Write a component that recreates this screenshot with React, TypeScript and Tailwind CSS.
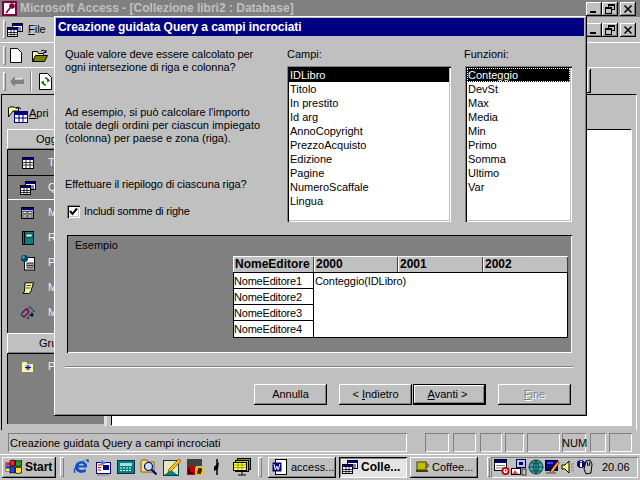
import React from "react";

const raised = "shadow-[inset_-1px_-1px_0_#000,inset_1px_1px_0_#fff,inset_-2px_-2px_0_#808080]";
const sunkenThin = "shadow-[inset_1px_1px_0_#808080,inset_-1px_-1px_0_#fff]";
const field = "shadow-[inset_1px_1px_0_#808080,inset_2px_2px_0_#000,inset_-1px_-1px_0_#fff,inset_-2px_-2px_0_#c0c0c0]";

function Grip() {
  return <div className="w-[3px] h-[19px] ml-[3px] shrink-0 border-l border-t border-white border-r border-r-[#808080] border-b border-b-[#808080]" />;
}

function WinButtons({ className }: { className: string }) {
  const b = `w-[16px] h-[14px] bg-[#c0c0c0] flex items-center justify-center ${raised}`;
  return (
    <div className={`flex gap-[0px] ${className}`}>
      <div className={b}><svg width="10" height="10" viewBox="0 0 10 10"><rect x="1" y="7" width="6" height="2" fill="#000" /></svg></div>
      <div className={`${b} mr-[2px]`}><svg width="10" height="10" viewBox="0 0 10 10" fill="none" stroke="#000"><rect x="3.5" y="0.5" width="6" height="5" /><path d="M3 1.5h6" /><rect x="0.5" y="3.5" width="6" height="6" fill="#c0c0c0" /><path d="M0 4.5h6" /></svg></div>
      <div className={b}><svg width="10" height="10" viewBox="0 0 10 10" stroke="#000" strokeWidth="1.5"><path d="M1.5 1.5l7 7M8.5 1.5l-7 7" /></svg></div>
    </div>
  );
}

function Key() {
  return (
    <svg width="15" height="15" viewBox="0 0 15 15"><rect width="15" height="15" fill="#800040" /><rect x="2" y="2" width="11" height="11" fill="#fff" /><path d="M4 12l4-5M4 11l1 1M10 7a2 2 0 1 0-2-2 2 2 0 0 0 2 2z" stroke="#800040" strokeWidth="1.6" fill="#800040" /></svg>
  );
}

function GridIcon({ size = 12 }: { size?: number }) {
  return (
    <svg width={size} height={size} viewBox="0 0 12 12"><rect x="0.5" y="0.5" width="11" height="11" fill="#fff" stroke="#000" /><rect x="1" y="1" width="10" height="2" fill="#000080" /><path d="M1 5.5h10M1 8h10M4 3v8M8 3v8" stroke="#000" strokeWidth="0.8" /></svg>
  );
}

function QueryIcon() {
  return (
    <svg width="16" height="14" viewBox="0 0 16 14"><rect x="5.5" y="0.5" width="10" height="8" fill="#fff" stroke="#000" /><rect x="6" y="1" width="9" height="2" fill="#000080" /><path d="M7 5h7M7 7h7" stroke="#000080" /><rect x="0.5" y="4.5" width="10" height="9" fill="#fff" stroke="#000" /><rect x="1" y="5" width="9" height="2" fill="#000080" /><path d="M1 9.5h9M1 11.5h9M4 7v6M7 7v6" stroke="#000" strokeWidth="0.8" /></svg>
  );
}

function FormIcon() {
  return (
    <svg width="13" height="12" viewBox="0 0 13 12"><rect x="0.5" y="0.5" width="12" height="11" fill="#c0c0c0" stroke="#000" /><rect x="1" y="1" width="11" height="2" fill="#000080" /><rect x="2" y="4.5" width="4" height="2" fill="#fff" stroke="#000" strokeWidth="0.6" /><rect x="7" y="4.5" width="4" height="2" fill="#fff" stroke="#000" strokeWidth="0.6" /><rect x="2" y="8" width="4" height="2" fill="#fff" stroke="#000" strokeWidth="0.6" /><rect x="7" y="8" width="4" height="2" fill="#fff" stroke="#000" strokeWidth="0.6" /></svg>
  );
}

function ReportIcon() {
  return (
    <svg width="12" height="14" viewBox="0 0 12 14"><rect x="0.5" y="0.5" width="11" height="13" fill="#008080" stroke="#000" /><path d="M2.5 0v14" stroke="#000" /><rect x="4" y="3" width="6" height="3" fill="#c8e8e8" stroke="#000" strokeWidth="0.5" /></svg>
  );
}

function PageIcon() {
  return (
    <svg width="16" height="16" viewBox="0 0 16 16"><rect x="4.5" y="2.5" width="10" height="12.5" fill="#fff" stroke="#000" /><circle cx="4.5" cy="3.5" r="3.5" fill="#004080" /><circle cx="3.5" cy="2.5" r="1.4" fill="#40a0a0" /><rect x="7" y="8" width="6" height="5" fill="#fff" stroke="#000" strokeWidth="0.8" /><path d="M7 10.5h6M9 8v5M11 8v5" stroke="#000" strokeWidth="0.7" /></svg>
  );
}

function MacroIcon() {
  return (
    <svg width="12" height="12" viewBox="0 0 12 12"><path d="M3 0.8h8.5L9 9q-.6 2-2.2 2.4H.8q1.4-.8 1.8-2.4z" fill="#ffff99" stroke="#000" /><path d="M4.5 3.5h4.5M4 6h4.5" stroke="#000" strokeWidth="0.7" /></svg>
  );
}

function ModuleIcon() {
  return (
    <svg width="17" height="14" viewBox="0 0 17 14"><path d="M2 8l5-5 3 3-5 5z" fill="none" stroke="#800040" strokeWidth="1.4" /><path d="M8 4l3-3 4 4-3 3-2 2" fill="none" stroke="#004080" strokeWidth="1.4" strokeDasharray="2 1" /><circle cx="2.5" cy="8" r="1.5" fill="#008080" /><circle cx="13" cy="9" r="1.5" fill="#000" /><circle cx="9" cy="12" r="1.3" fill="#404040" /></svg>
  );
}

function FolderStar() {
  return (
    <svg width="14" height="12" viewBox="0 0 14 12"><path d="M0.5 2.5l1-2h4l1 2h6v9h-12z" fill="#ffff99" stroke="#808080" /><path d="M7 3.5v6M4 6.5h6M5 4.5l4 4M9 4.5l-4 4" stroke="#0000ff" strokeWidth="1" /></svg>
  );
}

function Item({ icon, label, active }: { icon: React.ReactNode; label: string; active?: boolean }) {
  return (
    <div className={`h-[25px] flex items-center ${active ? "shadow-[inset_1px_1px_0_#000,inset_-1px_-1px_0_#fff] bg-[#808080]" : ""}`}>
      <div className="w-[40px] flex justify-center pl-[1px] shrink-0">{icon}</div>
      <span className="text-[#f0f0f0] ml-[1px]">{label}</span>
    </div>
  );
}

const fields = ["IDLibro", "Titolo", "In prestito", "Id arg", "AnnoCopyright", "PrezzoAcquisto", "Edizione", "Pagine", "NumeroScaffale", "Lingua"];
const funcs = ["Conteggio", "DevSt", "Max", "Media", "Min", "Primo", "Somma", "Ultimo", "Var"];

function ListBox({ items, focus, width }: { items: string[]; focus?: boolean; width: string }) {
  return (
    <div className={`h-[156px] bg-white p-[2px] ${width} ${field}`}>
      {items.map((t, i) => (
        <div key={t} className={`h-[14px] leading-[14px] pl-[1px] ${i === 0 ? "bg-black text-white" : "text-black"} ${i === 0 && focus ? "outline-1 outline-dotted outline-white -outline-offset-1" : ""}`}>{t}</div>
      ))}
    </div>
  );
}

function DlgButton({ children, className = "" }: { children: React.ReactNode; className?: string }) {
  return <div className={`w-[73px] h-[21px] bg-[#c0c0c0] flex items-center justify-center ${raised} ${className}`}>{children}</div>;
}

function Dialog() {
  const headCell = "h-[17px] bg-[#c0c0c0] font-bold text-[12px] pl-[2px] leading-[16px] border-b border-black shadow-[inset_1px_1px_0_#fff,inset_-1px_0_0_#404040]";
  return (
    <div className={`absolute left-[54px] top-[16px] w-[533px] h-[400px] bg-[#c0c0c0] p-[2px] flex flex-col ${raised}`}>
      <div className="h-[18px] bg-[#000080] text-white font-bold text-[12px] leading-[18px] pl-[2px] tracking-[-0.06px] mr-[1px] shrink-0">Creazione guidata Query a campi incrociati</div>
      <div className="flex-1 flex flex-col pl-[9px] pt-[12px]">
        <div className="flex">
          <div className="w-[222px] shrink-0">
            <p className="tracking-[-0.07px]">Quale valore deve essere calcolato per<br />ogni intersezione di riga e colonna?</p>
            <p className="mt-[32px]">Ad esempio, si può calcolare l'importo<br /><span className="tracking-[0.05px]">totale degli ordini per ciascun impiegato</span><br />(colonna) per paese e zona (riga).</p>
            <p className="mt-[33px] tracking-[-0.1px]">Effettuare il riepilogo di ciascuna riga?</p>
            <label className="mt-[14px] ml-[2px] flex items-center gap-[5px]">
              <span className={`w-[13px] h-[13px] bg-white flex items-center justify-center ${field}`}>
                <svg width="9" height="9" viewBox="0 0 9 9"><path d="M1 4l2.5 3L8 1.5" fill="none" stroke="#000" strokeWidth="2" /></svg>
              </span>
              <span className="tracking-[-0.2px] -ml-[1px]">Includi somme di righe</span>
            </label>
          </div>
          <div className="w-[178px] shrink-0">
            <div>Campi:</div>
            <div className="mt-[5px]"><ListBox items={fields} width="w-[164px]" /></div>
          </div>
          <div className="w-[107px] shrink-0">
            <div className="-ml-[1px]">Funzioni:</div>
            <div className="mt-[5px]"><ListBox items={funcs} focus width="w-[107px]" /></div>
          </div>
        </div>
        <div className="ml-[2px] mt-[13px] w-[505px] h-[118px] bg-[#808080] relative shrink-0 pt-[4px] pl-[8px] shadow-[inset_1px_1px_0_#000,inset_-1px_-1px_0_#fff]">
          <div className="text-black">Esempio</div>
          <div className="mt-[4px] ml-[158px] w-[335px] grid grid-cols-[81px_84px_85px_85px]">
            <div className={headCell}>NomeEditore</div>
            <div className={headCell}>2000</div>
            <div className={headCell}>2001</div>
            <div className={headCell}>2002</div>
            <div className="col-span-4 flex bg-white border-b border-r border-black">
              <div className="w-[81px] shrink-0">
                {["NomeEditore1", "NomeEditore2", "NomeEditore3", "NomeEditore4"].map((n, i) => (
                  <div key={n} className={`h-[16px] leading-[17px] tracking-[-0.2px] border-r border-l border-black ${i < 3 ? "border-b" : ""}`}>{n}</div>
                ))}
              </div>
              <div className="pl-[1px] leading-[17px] tracking-[-0.1px]">Conteggio(IDLibro)</div>
            </div>
          </div>
        </div>
        <div className="mt-[13px] w-[508px] h-[2px] bg-white border-t border-[#808080] shrink-0" />
        <div className="mt-[16px] flex pl-[189px]">
          <DlgButton>Annulla</DlgButton>
          <DlgButton className="ml-[12px]"><span>&lt; <u>I</u>ndietro</span></DlgButton>
          <DlgButton className="ml-[1px] outline outline-black -outline-offset-1 shadow-[inset_-2px_-2px_0_#000,inset_2px_2px_0_#fff,inset_-3px_-3px_0_#808080]"><span className="-ml-[4px]"><u>A</u>vanti &gt;</span></DlgButton>
          <DlgButton className="ml-[12px] text-[#808080] [text-shadow:1px_1px_0_#fff]"><span><u>F</u>ine</span></DlgButton>
        </div>
      </div>
    </div>
  );
}

function TrayIcons() {
  return (
    <div className="flex items-center gap-[1px] ml-[3px]">
      <svg width="16" height="17" viewBox="0 0 16 17"><rect x="0.5" y="0.5" width="12" height="11" fill="#fff" stroke="#000" /><rect x="1" y="1" width="11" height="3" fill="#000080" /><path d="M2 6.5h9M2 9h9" stroke="#808080" /><circle cx="11.5" cy="12" r="4" fill="#c00000" /><circle cx="11.5" cy="12" r="2.2" fill="#fff" /><path d="M11.5 10.5V12h1" stroke="#000" strokeWidth="0.8" fill="none" /></svg>
      <svg width="16" height="17" viewBox="0 0 16 17"><rect x="5.5" y="0.5" width="9" height="8" fill="#c0c0ff" stroke="#000040" /><rect x="8" y="3" width="4" height="3" fill="#000080" /><rect x="0.5" y="9.5" width="9" height="6" fill="#fff" stroke="#000" /><path d="M1 15l3-4 3 4" fill="#ff4040" /><rect x="11" y="10" width="4" height="6" fill="#c0c0c0" stroke="#000" strokeWidth="0.7" /></svg>
      <svg width="16" height="16" viewBox="0 0 16 16"><circle cx="8" cy="8" r="7" fill="#40a0a0" stroke="#004040" /><path d="M1 8h14M8 1v14M3 3.5q5 3 10 0M3 12.5q5-3 10 0M8 1q-5 7 0 14M8 1q5 7 0 14" stroke="#004040" strokeWidth="0.8" fill="none" /></svg>
      <svg width="15" height="16" viewBox="0 0 15 16"><rect x="0.5" y="1.5" width="12" height="10" fill="#000080" stroke="#000" /><path d="M2 3h6v2H2z" fill="#4040ff" /><path d="M13 2L6 11l-1 3 3-1 6-9z" fill="#ffcc00" stroke="#800000" strokeWidth="0.8" /><path d="M1 13h10v2H1z" fill="#808080" /></svg>
      <svg width="14" height="16" viewBox="0 0 14 16"><path d="M1 6h3l4-4v12l-4-4H1z" fill="#ffff80" stroke="#000" /><path d="M10 6l3-2M10 8h3M10 10l3 2" stroke="#808080" /></svg>
      <svg width="18" height="16" viewBox="0 0 18 16"><circle cx="5" cy="5" r="4" fill="#000080" /><rect x="4" y="4" width="2" height="4" fill="#fff" /><rect x="4" y="1.8" width="2" height="1.4" fill="#fff" /><path d="M10 2l4-1 2 4-1 9-5 1-2-5z" fill="#c0c0c0" stroke="#000" /><path d="M11 3l1 4M14 3l-1 4" stroke="#000" /></svg>
    </div>
  );
}

function QuickIcons() {
  return (
    <div className="flex items-center ml-[8px] gap-[5px] w-[186px] shrink-0">
      <svg width="18" height="18" viewBox="0 0 18 18"><path d="M15 9.5H6.2c.2 2.5 3.800 3.500 7.500 1.300v3c-4.500 2.200-10.500.8-10.500-4.800C3.200 4 9 2 12.800 4.200 15 5.500 15.200 7.800 15 9.500zM6.300 7.500H12c0-2.700-5-2.800-5.700 0z" fill="#0a50c8" /><path d="M2 14C0 10 8 3 16 1c1.500 1 1 3 0 4-.5-1-1-2-2-3C9 4 5 8 3 12c0 1 .3 2 1 2.500-1 .7-1.700.5-2-.5z" fill="#0a50c8" /></svg>
      <svg width="17" height="17" viewBox="0 0 17 17"><rect x="1.500" y="3.500" width="14" height="11" fill="#fff" stroke="#000080" /><path d="M3 6h3M3 8.500h3M3 11h3" stroke="#c00000" /><rect x="8" y="6" width="6" height="5" fill="#000080" /><path d="M6 1l5 3-5 3z" fill="#4080ff" /><path d="M2 16h12" stroke="#808080" /></svg>
      <svg width="18" height="14" viewBox="0 0 18 14"><rect x="0.500" y="0.500" width="17" height="13" fill="#008080" stroke="#003040" /><rect x="3" y="3" width="12" height="3" fill="#a0e0e0" /><path d="M3 8h12M3 10.500h12" stroke="#fff" strokeDasharray="2 1" /></svg>
      <svg width="18" height="18" viewBox="0 0 18 18"><path d="M1 4l1-2h5l1 2h6v10H1z" fill="#ffe080" stroke="#806000" /><circle cx="8.500" cy="8.500" r="4" fill="#c0e0ff" stroke="#000080" strokeWidth="1.200" /><path d="M11.500 11.500l5 5" stroke="#000080" strokeWidth="2.200" /></svg>
      <svg width="18" height="18" viewBox="0 0 18 18"><rect x="0.500" y="2.500" width="15" height="15" fill="#e8e8c0" stroke="#004040" /><path d="M1 17l7-5 7 5z" fill="#008080" /><path d="M16 1L6 11l-1 3 3-1L18 3z" fill="#ffc000" stroke="#804000" strokeWidth="0.700" /></svg>
      <svg width="18" height="18" viewBox="0 0 18 18"><rect x="1" y="1" width="15" height="7" fill="#404040" /><rect x="1" y="8" width="9" height="9" fill="#c00000" /><rect x="9" y="9" width="8" height="8" fill="#ffc000" /><path d="M3 10v5h4M12 11h3v2h-3v2h3" stroke="#000" strokeWidth="1.300" fill="none" /></svg>
      <svg width="16" height="18" viewBox="0 0 16 18"><path d="M8 1v16" stroke="#000" strokeWidth="1.500" /><path d="M5 9l5-5-1 7-4 2z" fill="#000" /></svg>
      <svg className="ml-[3px]" width="18" height="18" viewBox="0 0 18 18"><rect x="4.500" y="0.500" width="13" height="11" fill="#808040" stroke="#000" /><rect x="2.500" y="2.500" width="13" height="11" fill="#c0c040" stroke="#000" /><rect x="0.500" y="4.500" width="13" height="8" fill="#ffff40" stroke="#000" /><path d="M1 7h12M1 9.500h12M5 5v7M9 5v7" stroke="#806000" strokeWidth="0.600" /><path d="M9 14v3M5 17h8" stroke="#000" /></svg>
    </div>
  );
}

export default function App() {
  return (
    <div className="relative w-[640px] h-[480px] overflow-hidden bg-[#c0c0c0] text-black text-[11px] leading-[13px] font-['Liberation_Sans',Arial,sans-serif] flex flex-col">
      {/* Main window title */}
      <div className="h-[17px] shrink-0 bg-[#808080] flex items-center pl-[2px] pr-[4px]">
        <Key />
        <span className="ml-[3px] font-bold text-[12px] text-[#c0c0c0] whitespace-nowrap">Microsoft Access - [Collezione libri2 : Database]</span>
        <WinButtons className="ml-auto" />
      </div>
      {/* Menu */}
      <div className="h-[25px] shrink-0 flex items-center pr-[4px]">
        <Grip />
        <div className="ml-[1px] shrink-0"><QueryIcon /></div>
        <span className="ml-[5px]"><u>F</u>ile</span>
        <WinButtons className="ml-auto" />
      </div>
      {/* Toolbars */}
      <div className="h-[25px] shrink-0 flex items-center border-t border-white">
        <Grip />
        <svg className="ml-[4px]" width="12" height="15" viewBox="0 0 12 15"><path d="M0.500 0.500h7l4 4v10h-11z" fill="#fff" stroke="#000" /></svg>
        <svg className="ml-[10px]" width="16" height="13" viewBox="0 0 16 13"><path d="M0.500 12.500V2.500h5l1 2h5v8z" fill="#ffff99" stroke="#000" /><path d="M0.500 12.500l3-6h12l-3 6z" fill="#808000" stroke="#000" /><path d="M9 2q3-2 5 1M14 1v2.500h-2.500" fill="none" stroke="#000" /></svg>
      </div>
      <div className="h-[27px] shrink-0 flex items-center border-t border-white relative">
        <Grip />
        <svg className="ml-[4px]" width="14" height="11" viewBox="0 0 14 11"><path d="M0 5.500L5 0v3h9v5H5v3z" fill="#808080" /><path d="M5 3h8" stroke="#fff" /></svg>
        <div className="ml-[6px] w-[2px] h-[20px] border-l border-[#808080] border-r border-r-white" />
        <svg className="ml-[7px]" width="13" height="17" viewBox="0 0 13 17"><path d="M0.500 0.500h8l4 4v12h-12z" fill="#fff" stroke="#000" /><path d="M6 5a3 3 0 0 1 3 3l1.500-1M7 12a3 3 0 0 1-3-3L2.500 10" fill="none" stroke="#008000" strokeWidth="1.600" /></svg>
        <div className={`absolute right-[49px] top-[1px] w-[4px] h-[24px] ${raised}`} />
      </div>
      {/* Database window */}
      <div className="h-[336px] shrink-0 ml-[1px] mr-[3px] flex flex-col border-l border-t border-black border-r border-r-white bg-[#c0c0c0] pl-[5px] pr-[4px]">
        <div className="h-[34px] shrink-0 flex items-center pl-[1px] pt-[3px]">
          <svg width="20" height="18" viewBox="0 0 20 18"><path d="M0.500 12V3l1-1h5l1 1h3v3H5z" fill="#ffff99" stroke="#000" /><path d="M8 3q3-2 5 1" fill="none" stroke="#000" /><rect x="6.500" y="6.500" width="13" height="11" fill="#fff" stroke="#000080" /><rect x="7" y="7" width="12" height="3" fill="#000080" /><path d="M7 13h12M11 10v8M15 10v8" stroke="#000080" /></svg>
          <span className="ml-[1px]"><u>A</u>pri</span>
        </div>
        <div className="flex-1 flex min-h-0">
          <div className="w-[97px] h-[295px] bg-[#808080] shrink-0 shadow-[inset_1px_1px_0_#000]">
            <div className={`h-[21px] bg-[#c0c0c0] flex items-center pl-[29px] ${raised}`}>Ogg</div>
            <Item icon={<GridIcon />} label="T" />
            <Item icon={<QueryIcon />} label="Q" active />
            <Item icon={<FormIcon />} label="M" />
            <Item icon={<ReportIcon />} label="R" />
            <Item icon={<PageIcon />} label="P" />
            <Item icon={<MacroIcon />} label="M" />
            <Item icon={<ModuleIcon />} label="M" />
            <div className={`h-[21px] mt-[8px] bg-[#c0c0c0] flex items-center pl-[32px] ${raised}`}>Gru</div>
            <Item icon={<FolderStar />} label="P" />
          </div>
          <div className="w-[3px] h-[297px] bg-[#dfdfdf] shrink-0" />
          <div className="ml-[4px] flex-1 h-[296px] bg-white border-l border-t border-black mr-[1px] shadow-[1px_1px_0_#fff]" />
        </div>
      </div>
      {/* Status bar */}
      <div className="h-[19px] mt-[3px] shrink-0 flex pl-[8px]">
        <div className={`w-[399px] pl-[2px] leading-[20px] ${sunkenThin}`}>Creazione guidata Query a campi incrociati</div>
        <div className={`ml-[18px] w-[24px] ${sunkenThin}`} />
        <div className={`ml-[4px] w-[23px] ${sunkenThin}`} />
        <div className={`ml-[4px] w-[22px] ${sunkenThin}`} />
        <div className={`ml-[3px] w-[19px] ${sunkenThin}`} />
        <div className={`ml-[3px] w-[33px] ${sunkenThin}`} />
        <div className={`ml-[2px] w-[24px] text-center leading-[20px] ${sunkenThin}`}>NUM</div>
        <div className={`ml-[4px] w-[16px] ${sunkenThin}`} />
        <div className={`ml-[3px] w-[23px] ${sunkenThin}`} />
      </div>
      {/* Taskbar */}
      <div className="h-[26px] mt-[2px] shrink-0 flex items-center pl-[2px] border-t border-white pb-[1px]">
        <div className={`w-[54px] h-[21px] flex items-center pl-[3px] ${raised}`}>
          <svg width="18" height="16" viewBox="0 0 18 16"><path d="M0 3h4v10H0z" fill="#808080" /><path d="M1 4h4v2H1z" fill="#ff2020" /><path d="M1 7h4v2H1z" fill="#2040ff" /><path d="M1 10h4v2H1z" fill="#ffff20" /><path d="M5 2q3-1.500 5-.5V7Q7.500 6 5 7z" fill="#ff2020" stroke="#000" strokeWidth="0.800" /><path d="M10.500 1.500q3 1 6 0V7q-3 1-6 0z" fill="#20a020" stroke="#000" strokeWidth="0.800" /><path d="M5 8q3-1 5 0v6q-2.500-1-5 0z" fill="#2040ff" stroke="#000" strokeWidth="0.800" /><path d="M10.500 8q3 1 6 0v6q-3 1-6 0z" fill="#ffe020" stroke="#000" strokeWidth="0.800" /></svg>
          <span className="ml-[2px] font-bold text-[12px]">Start</span>
        </div>
        <div className="ml-[4px] w-[4px] h-[20px] shrink-0 shadow-[inset_1px_1px_0_#fff,inset_-1px_-1px_0_#808080]" />
        <QuickIcons />
        <div className="w-[4px] h-[20px] shrink-0 shadow-[inset_1px_1px_0_#fff,inset_-1px_-1px_0_#808080]" />
        <div className={`ml-[6px] w-[68px] h-[21px] flex items-center pl-[4px] ${raised}`}>
          <svg width="16" height="16" viewBox="0 0 16 16"><rect x="3.500" y="0.500" width="11" height="15" fill="#fff" stroke="#000" /><rect x="0.500" y="3.500" width="9" height="9" fill="#000080" /><path d="M2 5l1.300 6 1.500-4 1.500 4L7.800 5" fill="none" stroke="#fff" /></svg>
          <span className="ml-[3px]">access...</span>
        </div>
        <div className="ml-[3px] w-[68px] h-[21px] flex items-center pl-[3px] bg-[#e4e4e4] shadow-[inset_1px_1px_0_#000,inset_-1px_-1px_0_#fff,inset_2px_2px_0_#808080]">
          <QueryIcon />
          <span className="ml-[3px] font-bold text-[12px]">Colle...</span>
        </div>
        <div className={`ml-[3px] w-[68px] h-[21px] flex items-center pl-[6px] ${raised}`}>
          <svg width="13" height="12" viewBox="0 0 13 12"><rect x="1" y="1" width="9" height="8" fill="#c0c000" stroke="#404000" /><rect x="0" y="9" width="12" height="2" fill="#404000" /><path d="M10 3h2v3h-2" fill="none" stroke="#404000" /></svg>
          <span className="ml-[3px]">Coffee...</span>
        </div>
        <div className="ml-[9px] w-[3px] h-[20px] shrink-0 shadow-[inset_1px_1px_0_#fff,inset_-1px_-1px_0_#808080]" />
        <div className={`w-[147px] h-[21px] ml-[1px] flex items-center ${sunkenThin}`}>
          <TrayIcons />
          <span className="ml-[8px]">20.06</span>
        </div>
      </div>
      <Dialog />
    </div>
  );
}
